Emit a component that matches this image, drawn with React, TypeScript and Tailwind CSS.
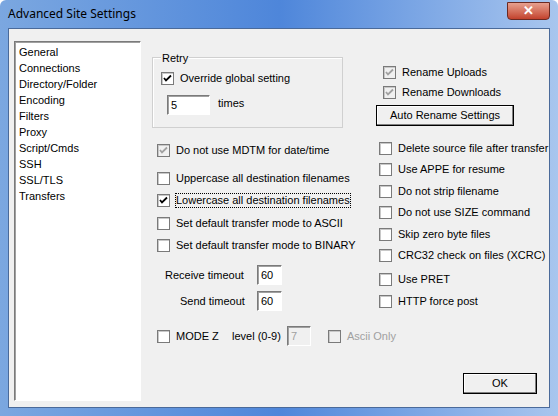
import React from 'react';

const Check = ({ checked, disabled, grayText, label, focus }: { checked?: boolean; disabled?: boolean; grayText?: boolean; label: string; focus?: boolean }) => (
  <div className="flex h-[16px] items-center gap-[6px] whitespace-nowrap">
    <div className={`flex h-[13px] w-[13px] shrink-0 items-center justify-center border border-[#7a7a7a] ${disabled ? 'bg-[#f0f0f0]' : 'bg-white'} shadow-[inset_1px_1px_0_#c8c8c8]`}>
      {checked ? (
        <svg width="9" height="9" viewBox="0 0 9 9">
          <path d="M1 4 L3 6.5 L8 1.5" fill="none" stroke={disabled ? '#a0a0a0' : '#000'} strokeWidth="1.8" />
        </svg>
      ) : null}
    </div>
    <span className={`${grayText ? 'text-[#a0a0a0]' : 'text-black'} ${focus ? 'outline outline-1 outline-dotted outline-black' : ''} leading-[13px]`}>{label}</span>
  </div>
);

const Box = ({ value, w, disabled }: { value: string; w: string; disabled?: boolean }) => (
  <div className={`${w} h-[20px] border border-t-[#7a7a7a] border-l-[#7a7a7a] border-r-white border-b-white ${disabled ? 'bg-[#f0f0f0] text-[#a0a0a0]' : 'bg-white text-black'} pl-[3px] leading-[18px] shadow-[inset_1px_1px_0_#a0a0a0]`}>
    {value}
  </div>
);

const Btn = ({ label, w }: { label: string; w: string }) => (
  <div className={`${w} flex h-[21px] items-center justify-center border border-black bg-[#f0f0f0] shadow-[inset_-1px_-1px_0_#808080,inset_1px_1px_0_#fff]`}>
    {label}
  </div>
);

const pages = ['General', 'Connections', 'Directory/Folder', 'Encoding', 'Filters', 'Proxy', 'Script/Cmds', 'SSH', 'SSL/TLS', 'Transfers'];

export default function App() {
  return (
    <div className="h-[416px] w-[558px] overflow-hidden rounded-t-[6px] bg-gradient-to-r from-[#7ba7e0] via-[#4e86da] to-[#a9c6ee] text-[11px] text-black" style={{ fontFamily: '"Liberation Sans", Arial, sans-serif' }}>
      <div className="flex h-[28px] items-center justify-between pl-[8px] pr-[8px]">
        <span className="text-[12px] text-black" style={{ fontFamily: '"Noto Sans", "DejaVu Sans", sans-serif' }}>Advanced Site Settings</span>
        <div className="-mt-[6px] flex h-[18px] w-[43px] items-center justify-center rounded-b-[4px] border border-[#6b2a22] bg-gradient-to-b from-[#e6a08f] to-[#c2412c] text-[13px] font-bold text-white">✕</div>
      </div>
      <div className="mx-[8px] flex h-[380px] border border-[#4a6a9a] bg-[#f0f0f0]">
        <div className="ml-[5px] mt-[12px] h-[360px] w-[127px] shrink-0 border border-t-[#7a7a7a] border-l-[#7a7a7a] border-r-white border-b-white bg-white pl-[4px] pt-[2px] shadow-[inset_1px_1px_0_#a0a0a0]">
          {pages.map((p) => (
            <div key={p} className="h-[16px] leading-[16px]">{p}</div>
          ))}
        </div>
        <div className="flex flex-1 flex-col pl-[11px]">
          <div className="flex">
            <div className="w-[224px]">
              <div className="relative mt-[28px] h-[71px] w-[191px] border border-[#d0d0d0] shadow-[inset_1px_1px_0_#fff]">
                <span className="absolute -top-[8px] left-[8px] bg-[#f0f0f0] px-[1px]">Retry</span>
                <div className="ml-[8px] mt-[12px]"><Check checked label="Override global setting" /></div>
                <div className="ml-[14px] mt-[9px] flex items-center gap-[8px]">
                  <Box value="5" w="w-[43px]" />
                  <span className="-mt-[3px]">times</span>
                </div>
              </div>
              <div className="ml-[5px] mt-[14px] flex flex-col">
                <Check checked disabled label="Do not use MDTM for date/time" />
                <div className="mt-[12px]"><Check label="Uppercase all destination filenames" /></div>
                <div className="mt-[6px]"><Check checked focus label="Lowercase all destination filenames" /></div>
                <div className="mt-[7px]"><Check label="Set default transfer mode to ASCII" /></div>
                <div className="mt-[6px]"><Check label="Set default transfer mode to BINARY" /></div>
              </div>
              <div className="ml-[13px] mt-[12px] flex flex-col gap-[6px]">
                <div className="flex items-center">
                  <span className="w-[92px]">Receive timeout</span>
                  <Box value="60" w="w-[25px]" />
                </div>
                <div className="flex items-center">
                  <span className="w-[92px] pl-[15px]">Send timeout</span>
                  <Box value="60" w="w-[25px]" />
                </div>
              </div>
            </div>
            <div className="flex flex-col">
              <div className="ml-[7px] mt-[35px] flex flex-col gap-[4px]">
                <Check checked disabled label="Rename Uploads" />
                <Check checked disabled label="Rename Downloads" />
              </div>
              <div className="mt-[5px]"><Btn label="Auto Rename Settings" w="w-[138px]" /></div>
              <div className="ml-[3px] mt-[14px] flex flex-col gap-[5.5px]">
                <Check label="Delete source file after transfer" />
                <Check label="Use APPE for resume" />
                <Check label="Do not strip filename" />
                <Check label="Do not use SIZE command" />
                <Check label="Skip zero byte files" />
                <Check label="CRC32 check on files (XCRC)" />
                <div className="mt-[2px]"><Check label="Use PRET" /></div>
                <div className="mt-[1px]"><Check label="HTTP force post" /></div>
              </div>
            </div>
          </div>
          <div className="ml-[5px] mt-[15px] flex items-center">
            <div className="w-[75px]"><Check label="MODE Z" /></div>
            <span className="w-[55px]">level (0-9)</span>
            <Box value="7" w="w-[24px]" disabled />
            <div className="ml-[17px]"><Check disabled grayText label="Ascii Only" /></div>
          </div>
          <div className="mr-[12px] mt-[27px] flex justify-end">
            <Btn label="OK" w="w-[74px]" />
          </div>
        </div>
      </div>
    </div>
  );
}
